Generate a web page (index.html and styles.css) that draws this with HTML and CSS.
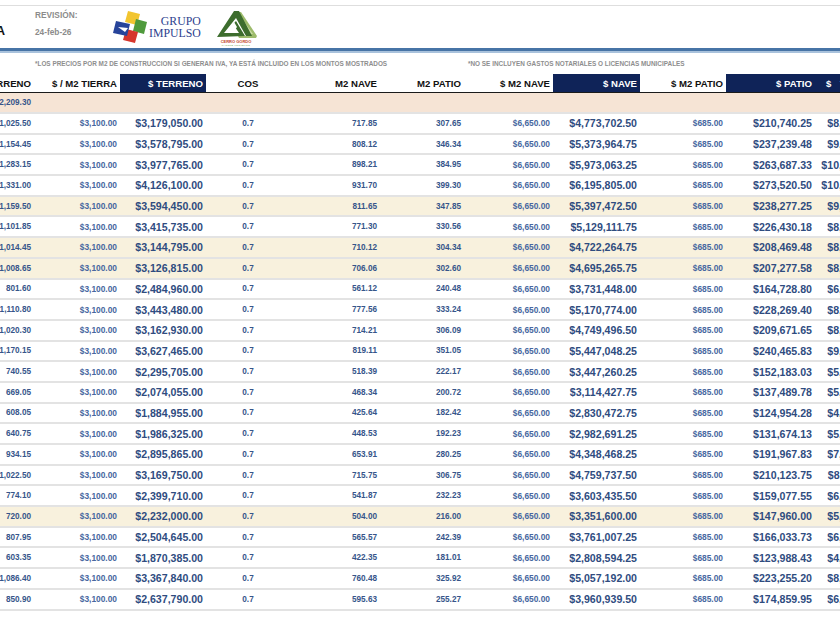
FILE: index.html
```html
<!DOCTYPE html>
<html lang="es">
<head>
<meta charset="utf-8">
<title>Tabla de precios</title>
<link rel="stylesheet" href="styles.css">
</head>
<body>
<div class="page">
  <header class="top">
    <div class="title"><span>TABLA</span></div>
    <div class="rev">
      <div>REVISIÓN:</div>
      <div>24-feb-26</div>
    </div>
    <div class="logo-gi">
      <svg class="gi-icon" viewBox="0 0 36 34" width="36" height="34">
        <polygon points="15,2 27,5 24,16 12,13" fill="#f2c530"/>
        <polygon points="23,10 34,13 31,25 20,22" fill="#4f9a3c"/>
        <polygon points="13,20 25,23 22,34 10,31" fill="#d6362c"/>
        <polygon points="3,12 17,15 14,27 0,24" fill="#27449a"/>
        <polygon points="5,18 15,19 12,23" fill="#ffffff"/>
      </svg>
      <div class="gi-text"><span>GRUPO</span><span>IMPULSO</span></div>
    </div>
    <div class="logo-cg">
      <svg viewBox="0 0 42 38" width="42" height="38">
        <polygon points="19,3 25,3 41,27 35,27" fill="#9dbb6c"/>
        <polygon points="23,11 27,11 37,25 33,25" fill="#c8dba3"/>
        <polygon points="22,27 41,27 40,29 23,29" fill="#9dbb6c"/>
        <path d="M1 28 L18 2 L23 2 L36 27 L30 27 L20 9 L8 24 L23 24 L17 15 L20 12 L29 27 Z" fill="#3d6d2e"/>
        <path d="M12 22 L18 13 L21 18 L18 22 Z" fill="#ffffff"/>
        <text x="20" y="33.5" class="cg-name">CERRO GORDO</text>
        <text x="20" y="37" class="cg-sub">PARQUE LOGÍSTICO</text>
      </svg>
    </div>
  </header>
  <div class="rule"></div>
  <div class="notes">
    <span>*LOS PRECIOS POR M2 DE CONSTRUCCION SI GENERAN IVA, YA ESTÁ INCLUIDO EN LOS MONTOS MOSTRADOS</span>
    <span>*NO SE INCLUYEN GASTOS NOTARIALES O LICENCIAS MUNICIPALES</span>
  </div>
  <div class="tbl">
    <div class="row head">
      <div>M2 TERRENO</div><div>$ / M2 TIERRA</div><div class="dark">$ TERRENO</div><div class="c">COS</div><div>M2 NAVE</div><div>M2 PATIO</div><div>$ M2 NAVE</div><div class="dark">$ NAVE</div><div>$ M2 PATIO</div><div class="dark">$ PATIO</div><div class="dark start">$ TOTAL</div>
    </div>
    <div class="row peach">
      <div class="m">2,209.30</div><div></div><div></div><div></div><div></div><div></div><div></div><div></div><div></div><div></div><div></div>
    </div>
    <div class="row"><div class="m">1,025.50</div><div class="s">$3,100.00</div><div class="b">$3,179,050.00</div><div class="m c">0.7</div><div class="m">717.85</div><div class="m">307.65</div><div class="s">$6,650.00</div><div class="b">$4,773,702.50</div><div class="s">$685.00</div><div class="b">$210,740.25</div><div class="b">$8,163,492.75</div></div>
    <div class="row"><div class="m">1,154.45</div><div class="s">$3,100.00</div><div class="b">$3,578,795.00</div><div class="m c">0.7</div><div class="m">808.12</div><div class="m">346.34</div><div class="s">$6,650.00</div><div class="b">$5,373,964.75</div><div class="s">$685.00</div><div class="b">$237,239.48</div><div class="b">$9,189,999.23</div></div>
    <div class="row"><div class="m">1,283.15</div><div class="s">$3,100.00</div><div class="b">$3,977,765.00</div><div class="m c">0.7</div><div class="m">898.21</div><div class="m">384.95</div><div class="s">$6,650.00</div><div class="b">$5,973,063.25</div><div class="s">$685.00</div><div class="b">$263,687.33</div><div class="b">$10,214,515.58</div></div>
    <div class="row"><div class="m">1,331.00</div><div class="s">$3,100.00</div><div class="b">$4,126,100.00</div><div class="m c">0.7</div><div class="m">931.70</div><div class="m">399.30</div><div class="s">$6,650.00</div><div class="b">$6,195,805.00</div><div class="s">$685.00</div><div class="b">$273,520.50</div><div class="b">$10,595,425.50</div></div>
    <div class="row cream"><div class="m">1,159.50</div><div class="s">$3,100.00</div><div class="b">$3,594,450.00</div><div class="m c">0.7</div><div class="m">811.65</div><div class="m">347.85</div><div class="s">$6,650.00</div><div class="b">$5,397,472.50</div><div class="s">$685.00</div><div class="b">$238,277.25</div><div class="b">$9,230,199.75</div></div>
    <div class="row"><div class="m">1,101.85</div><div class="s">$3,100.00</div><div class="b">$3,415,735.00</div><div class="m c">0.7</div><div class="m">771.30</div><div class="m">330.56</div><div class="s">$6,650.00</div><div class="b">$5,129,111.75</div><div class="s">$685.00</div><div class="b">$226,430.18</div><div class="b">$8,771,276.93</div></div>
    <div class="row cream"><div class="m">1,014.45</div><div class="s">$3,100.00</div><div class="b">$3,144,795.00</div><div class="m c">0.7</div><div class="m">710.12</div><div class="m">304.34</div><div class="s">$6,650.00</div><div class="b">$4,722,264.75</div><div class="s">$685.00</div><div class="b">$208,469.48</div><div class="b">$8,075,529.23</div></div>
    <div class="row cream"><div class="m">1,008.65</div><div class="s">$3,100.00</div><div class="b">$3,126,815.00</div><div class="m c">0.7</div><div class="m">706.06</div><div class="m">302.60</div><div class="s">$6,650.00</div><div class="b">$4,695,265.75</div><div class="s">$685.00</div><div class="b">$207,277.58</div><div class="b">$8,029,358.33</div></div>
    <div class="row"><div class="m">801.60</div><div class="s">$3,100.00</div><div class="b">$2,484,960.00</div><div class="m c">0.7</div><div class="m">561.12</div><div class="m">240.48</div><div class="s">$6,650.00</div><div class="b">$3,731,448.00</div><div class="s">$685.00</div><div class="b">$164,728.80</div><div class="b">$6,381,136.80</div></div>
    <div class="row"><div class="m">1,110.80</div><div class="s">$3,100.00</div><div class="b">$3,443,480.00</div><div class="m c">0.7</div><div class="m">777.56</div><div class="m">333.24</div><div class="s">$6,650.00</div><div class="b">$5,170,774.00</div><div class="s">$685.00</div><div class="b">$228,269.40</div><div class="b">$8,842,523.40</div></div>
    <div class="row"><div class="m">1,020.30</div><div class="s">$3,100.00</div><div class="b">$3,162,930.00</div><div class="m c">0.7</div><div class="m">714.21</div><div class="m">306.09</div><div class="s">$6,650.00</div><div class="b">$4,749,496.50</div><div class="s">$685.00</div><div class="b">$209,671.65</div><div class="b">$8,122,098.15</div></div>
    <div class="row"><div class="m">1,170.15</div><div class="s">$3,100.00</div><div class="b">$3,627,465.00</div><div class="m c">0.7</div><div class="m">819.11</div><div class="m">351.05</div><div class="s">$6,650.00</div><div class="b">$5,447,048.25</div><div class="s">$685.00</div><div class="b">$240,465.83</div><div class="b">$9,314,979.08</div></div>
    <div class="row"><div class="m">740.55</div><div class="s">$3,100.00</div><div class="b">$2,295,705.00</div><div class="m c">0.7</div><div class="m">518.39</div><div class="m">222.17</div><div class="s">$6,650.00</div><div class="b">$3,447,260.25</div><div class="s">$685.00</div><div class="b">$152,183.03</div><div class="b">$5,895,148.28</div></div>
    <div class="row"><div class="m">669.05</div><div class="s">$3,100.00</div><div class="b">$2,074,055.00</div><div class="m c">0.7</div><div class="m">468.34</div><div class="m">200.72</div><div class="s">$6,650.00</div><div class="b">$3,114,427.75</div><div class="s">$685.00</div><div class="b">$137,489.78</div><div class="b">$5,325,972.53</div></div>
    <div class="row"><div class="m">608.05</div><div class="s">$3,100.00</div><div class="b">$1,884,955.00</div><div class="m c">0.7</div><div class="m">425.64</div><div class="m">182.42</div><div class="s">$6,650.00</div><div class="b">$2,830,472.75</div><div class="s">$685.00</div><div class="b">$124,954.28</div><div class="b">$4,840,382.03</div></div>
    <div class="row"><div class="m">640.75</div><div class="s">$3,100.00</div><div class="b">$1,986,325.00</div><div class="m c">0.7</div><div class="m">448.53</div><div class="m">192.23</div><div class="s">$6,650.00</div><div class="b">$2,982,691.25</div><div class="s">$685.00</div><div class="b">$131,674.13</div><div class="b">$5,100,690.38</div></div>
    <div class="row"><div class="m">934.15</div><div class="s">$3,100.00</div><div class="b">$2,895,865.00</div><div class="m c">0.7</div><div class="m">653.91</div><div class="m">280.25</div><div class="s">$6,650.00</div><div class="b">$4,348,468.25</div><div class="s">$685.00</div><div class="b">$191,967.83</div><div class="b">$7,436,301.08</div></div>
    <div class="row"><div class="m">1,022.50</div><div class="s">$3,100.00</div><div class="b">$3,169,750.00</div><div class="m c">0.7</div><div class="m">715.75</div><div class="m">306.75</div><div class="s">$6,650.00</div><div class="b">$4,759,737.50</div><div class="s">$685.00</div><div class="b">$210,123.75</div><div class="b">$8,139,611.25</div></div>
    <div class="row"><div class="m">774.10</div><div class="s">$3,100.00</div><div class="b">$2,399,710.00</div><div class="m c">0.7</div><div class="m">541.87</div><div class="m">232.23</div><div class="s">$6,650.00</div><div class="b">$3,603,435.50</div><div class="s">$685.00</div><div class="b">$159,077.55</div><div class="b">$6,162,223.05</div></div>
    <div class="row cream"><div class="m">720.00</div><div class="s">$3,100.00</div><div class="b">$2,232,000.00</div><div class="m c">0.7</div><div class="m">504.00</div><div class="m">216.00</div><div class="s">$6,650.00</div><div class="b">$3,351,600.00</div><div class="s">$685.00</div><div class="b">$147,960.00</div><div class="b">$5,731,560.00</div></div>
    <div class="row"><div class="m">807.95</div><div class="s">$3,100.00</div><div class="b">$2,504,645.00</div><div class="m c">0.7</div><div class="m">565.57</div><div class="m">242.39</div><div class="s">$6,650.00</div><div class="b">$3,761,007.25</div><div class="s">$685.00</div><div class="b">$166,033.73</div><div class="b">$6,431,685.98</div></div>
    <div class="row"><div class="m">603.35</div><div class="s">$3,100.00</div><div class="b">$1,870,385.00</div><div class="m c">0.7</div><div class="m">422.35</div><div class="m">181.01</div><div class="s">$6,650.00</div><div class="b">$2,808,594.25</div><div class="s">$685.00</div><div class="b">$123,988.43</div><div class="b">$4,802,967.68</div></div>
    <div class="row"><div class="m">1,086.40</div><div class="s">$3,100.00</div><div class="b">$3,367,840.00</div><div class="m c">0.7</div><div class="m">760.48</div><div class="m">325.92</div><div class="s">$6,650.00</div><div class="b">$5,057,192.00</div><div class="s">$685.00</div><div class="b">$223,255.20</div><div class="b">$8,648,287.20</div></div>
    <div class="row"><div class="m">850.90</div><div class="s">$3,100.00</div><div class="b">$2,637,790.00</div><div class="m c">0.7</div><div class="m">595.63</div><div class="m">255.27</div><div class="s">$6,650.00</div><div class="b">$3,960,939.50</div><div class="s">$685.00</div><div class="b">$174,859.95</div><div class="b">$6,773,589.45</div></div>
  </div>
</div>
</body>
</html>
```
FILE: styles.css
```css
html, body {
  margin: 0;
  padding: 0;
  background: #ffffff;
  overflow: hidden;
}
body {
  font-family: "Liberation Sans", Arial, sans-serif;
  width: 840px;
  height: 630px;
}
.page {
  width: 840px;
  overflow: hidden;
}

/* ---------- header ---------- */
.top {
  margin-top: 5px;
  border-top: 1px solid #dedede;
  height: 42px;
  display: flex;
  align-items: flex-start;
}
.title {
  width: 5px;
  padding-right: 30px;
  display: flex;
  justify-content: flex-end;
  white-space: nowrap;
  font-weight: bold;
  font-size: 12.5px;
  line-height: 14px;
  color: #111;
  margin-top: 18px;
}
.rev {
  width: 78px;
  margin-top: 1px;
  font-weight: bold;
  font-size: 8.3px;
  line-height: 17px;
  color: #8b8b8b;
}
.logo-gi {
  display: flex;
  align-items: flex-start;
  width: 103px;
}
.gi-icon {
  display: block;
  flex: none;
  margin-top: 3px;
}
.gi-text {
  display: flex;
  flex-direction: column;
  align-items: flex-end;
  margin-top: 10px;
  font-family: "Liberation Serif", "Times New Roman", serif;
  font-size: 11.8px;
  line-height: 11.8px;
  color: #2d3f8e;
}
.logo-cg svg {
  display: block;
  margin-top: 3px;
}
.cg-name {
  font-family: "Liberation Sans", Arial, sans-serif;
  font-size: 4px;
  font-weight: bold;
  fill: #c2452d;
  text-anchor: middle;
}
.cg-sub {
  font-family: "Liberation Sans", Arial, sans-serif;
  font-size: 2.4px;
  fill: #6c9a4c;
  text-anchor: middle;
  letter-spacing: 0.3px;
}
.rule {
  height: 3px;
  background: #4774a6;
  border-bottom: 2px solid #a9c2dc;
}
.notes {
  height: 21px;
  display: grid;
  grid-template-columns: 433px auto;
  padding-left: 35px;
  align-items: center;
  font-size: 6.4px;
  font-weight: bold;
  color: #8e8e8e;
  white-space: nowrap;
}

/* ---------- table ---------- */
.tbl {
  width: 898px;
}
.row {
  display: grid;
  grid-template-columns: 34px 86px 86px 84px 90px 84px 89px 87px 86px 89px 83px;
  height: 18.7px;
  border-bottom: 2px solid #e3e3e3;
  align-items: center;
}
.row > div {
  display: flex;
  justify-content: flex-end;
  white-space: nowrap;
  padding-right: 3px;
}
.row > div.c {
  justify-content: center;
  padding-right: 0;
}
.head {
  height: 18px;
  border-bottom: 1.5px solid #1b1b1b;
  align-items: stretch;
  font-weight: bold;
  font-size: 9.6px;
  color: #111;
}
.head > div {
  align-items: center;
}
.head > div.dark {
  background: #0f2358;
  color: #ffffff;
}
.head > div.start {
  justify-content: flex-start;
  padding-left: 11px;
  word-spacing: 6px;
}
.peach {
  background: #f6e4d5;
  height: 19px;
}
.cream {
  background: #f8f1dd;
}
.m {
  font-size: 8.2px;
  font-weight: bold;
  color: #36558a;
}
.s {
  font-size: 8.4px;
  font-weight: bold;
  color: #4767a0;
}
.b {
  font-size: 10.6px;
  font-weight: bold;
  color: #2f4c7f;
}
```
